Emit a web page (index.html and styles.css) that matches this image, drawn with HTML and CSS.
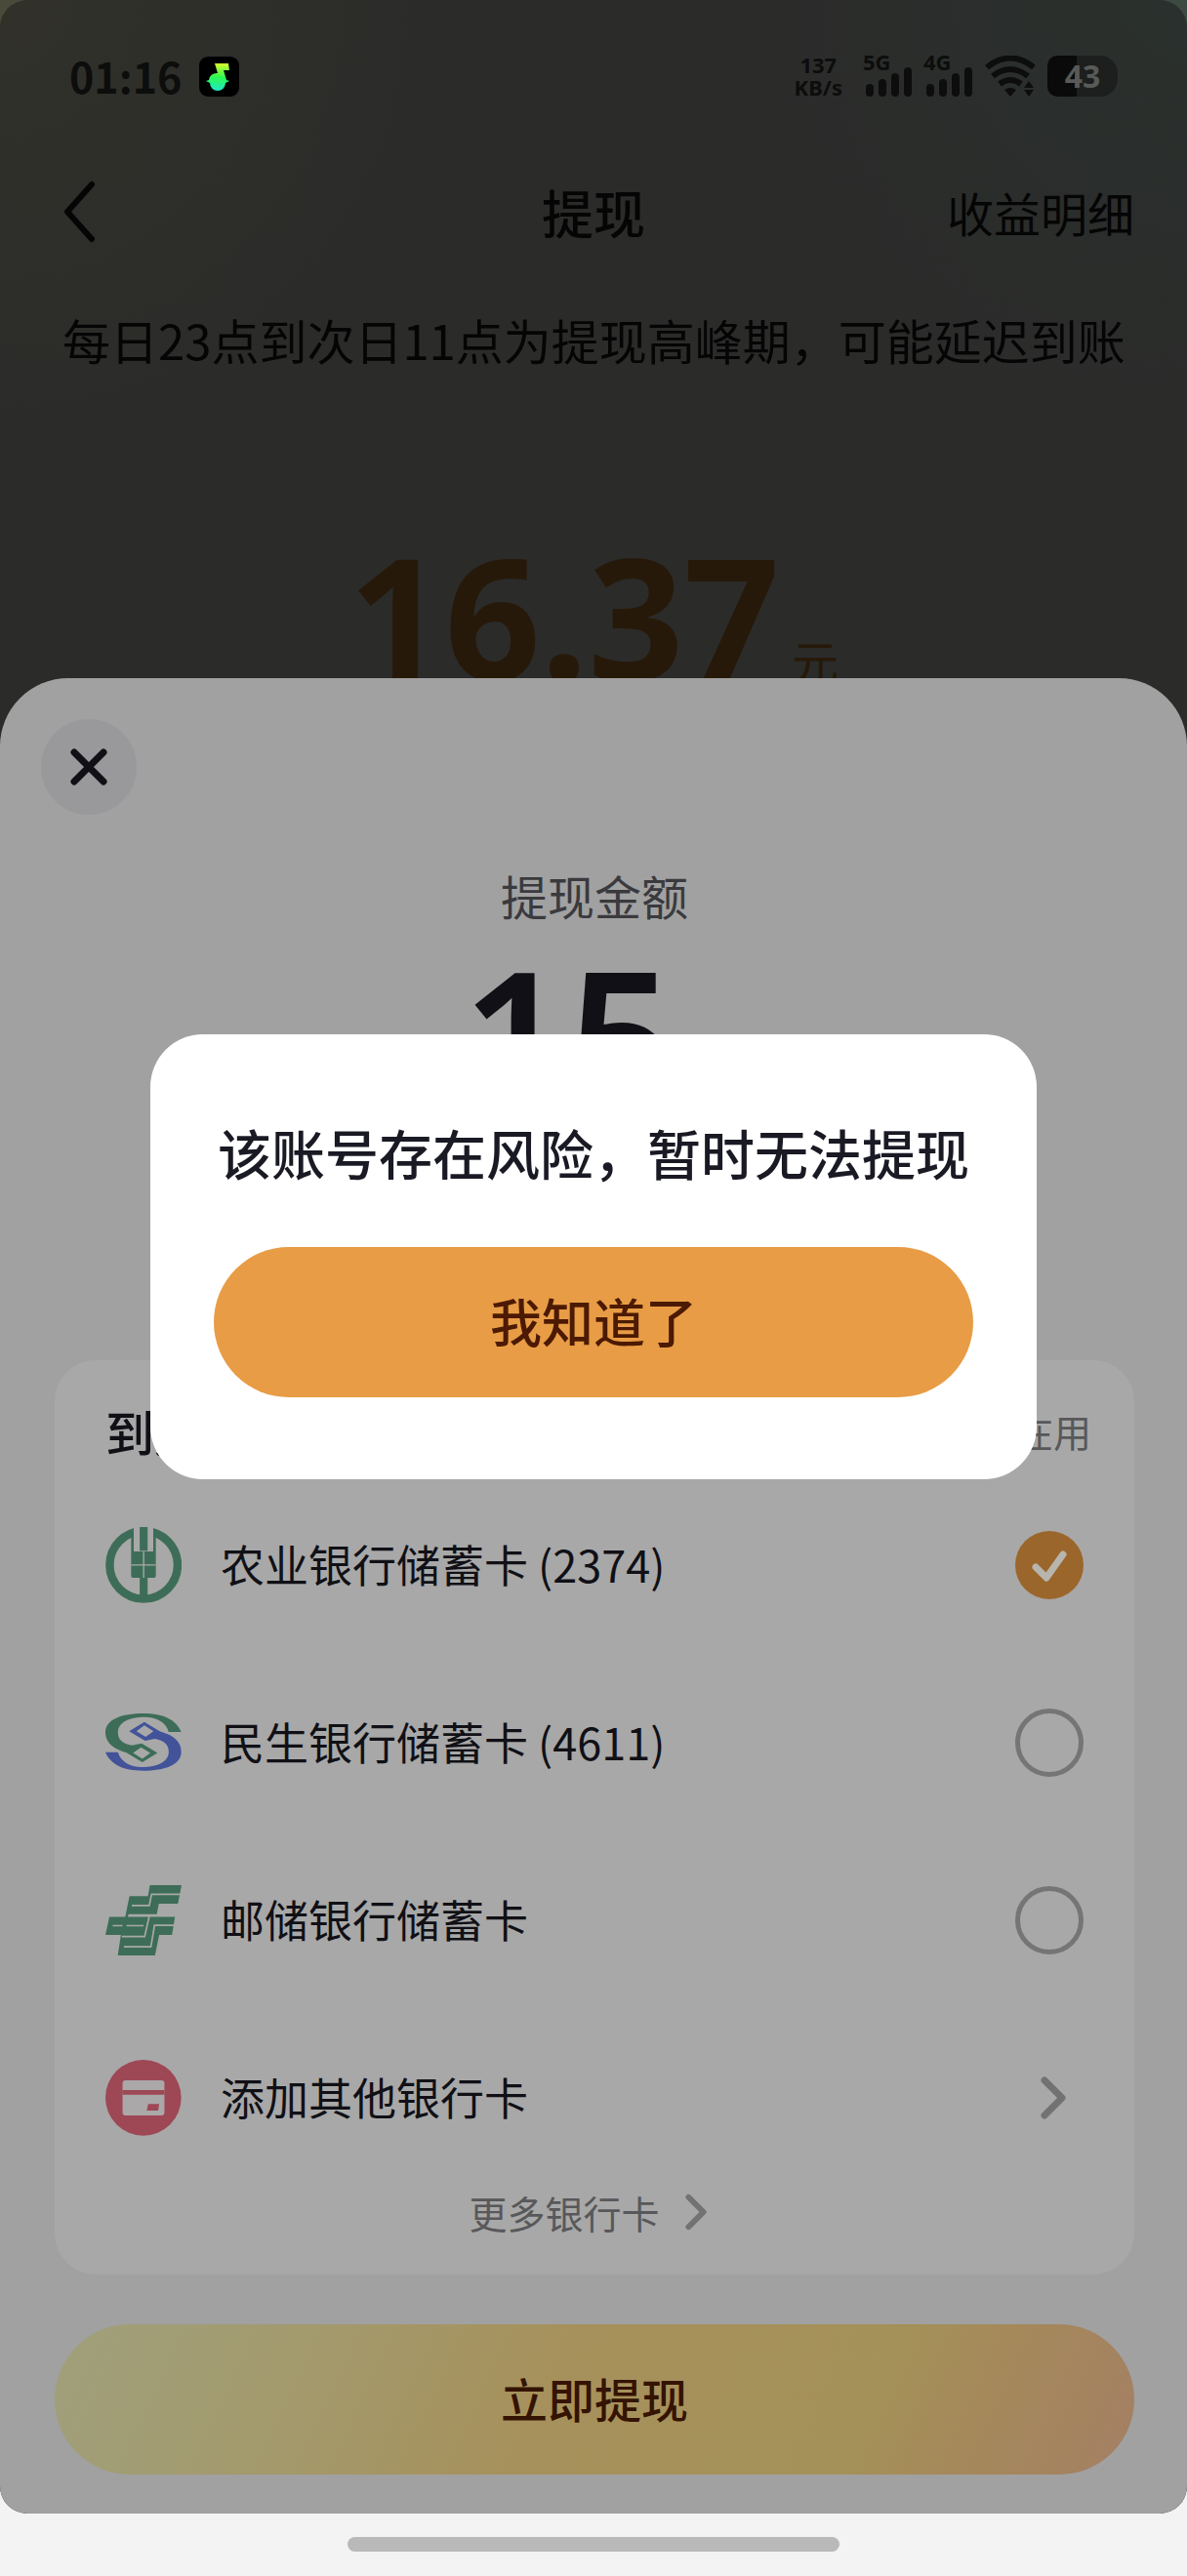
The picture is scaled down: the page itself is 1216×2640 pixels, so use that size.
FILE: index.html
```html
<!DOCTYPE html>
<html lang="zh-CN">
<head>
    <meta charset="UTF-8">
    <meta name="viewport" content="width=device-width, initial-scale=1.0">
    <title>提现</title>
    <link rel="stylesheet" href="styles.css">
</head>
<body>
    <div class="screen">
        <!-- Status bar -->
        <div class="status-bar">
            <span class="clock">01:16</span>
            <svg class="app-icon" viewBox="0 0 41 41" aria-hidden="true">
                <defs>
                    <linearGradient id="note" x1="0" y1="0" x2="0" y2="1">
                        <stop offset="0" stop-color="#d8ff2e"/>
                        <stop offset="0.5" stop-color="#2dfa50"/>
                        <stop offset="1" stop-color="#1fe8c8"/>
                    </linearGradient>
                </defs>
                <rect width="41" height="41" rx="9" fill="#000"/>
                <path fill="url(#note)" d="M16 7H30L31 14H25L28 24L31 25L27 27A8 8 0 0 1 11 27L7 25L10 24A8 8 0 0 1 19 17Z"/>
            </svg>
            <div class="status-icons">
                <span class="speed"><span>137</span><span>KB/s</span></span>
                <span class="signal">
                    <span class="signal-type">5G</span>
                    <svg viewBox="0 0 48 30" aria-hidden="true"><path d="M4 21V26M17 16V26M30 10V26M43 4V26"/></svg>
                </span>
                <span class="signal">
                    <span class="signal-type">4G</span>
                    <svg viewBox="0 0 48 30" aria-hidden="true"><path d="M4 21V26M17 16V26M30 10V26M43 4V26"/></svg>
                </span>
                <svg class="wifi" viewBox="0 0 52 42" aria-hidden="true">
                    <g fill="none" stroke="#0c0d0c" stroke-width="6">
                        <path d="M2 12Q26 -7 50 12"/>
                        <path d="M8 21Q26 7 44 21"/>
                        <path d="M15 29Q26 21 37 29"/>
                    </g>
                    <path fill="#0c0d0c" d="M20 35Q26 31 32 35L26 42ZM40 33L45 26L50 33ZM40 35L45 42L50 35Z"/>
                </svg>
                <span class="battery">43</span>
            </div>
        </div>

        <!-- Page behind the sheet -->
        <header class="nav">
            <button class="back" type="button" aria-label="返回">
                <svg viewBox="0 0 34 66" aria-hidden="true"><path d="M30 5L5 33L30 61"/></svg>
            </button>
            <h1>提现</h1>
            <a class="nav-link" href="#">收益明细</a>
        </header>
        <p class="notice">每日23点到次日11点为提现高峰期，可能延迟到账</p>
        <p class="balance"><span class="balance-value">16.37</span><span class="balance-unit">元</span></p>

        <!-- Withdraw sheet -->
        <form class="sheet">
            <button class="close" type="button" aria-label="关闭">
                <svg viewBox="0 0 38 38" aria-hidden="true"><path d="M4 4L34 34M34 4L4 34"/></svg>
            </button>
            <div class="amount">
                <p class="amount-label">提现金额</p>
                <p class="amount-value">15</p>
            </div>

            <div class="card">
                <div class="card-head">
                    <h2>到账</h2>
                    <span>在用</span>
                </div>
                <label class="row">
                    <svg class="logo" viewBox="0 0 231 231" aria-hidden="true">
                        <circle cx="116" cy="115" r="103" fill="none" stroke="#3d6d58" stroke-width="25"/>
                        <path fill="#a8a8a8" d="M86 0H146V60H86Z"/>
                        <path fill="#3d6d58" d="M78 8L86 4V74H145V4L153 8V148Q153 154 147 154H128V215H104V154H84Q78 154 78 148Z"/>
                        <path fill="#a8a8a8" d="M86 0H145V60Q145 74 132 74H99Q86 74 86 60Z"/>
                        <path fill="#3d6d58" d="M104 0H128V72H104Z"/>
                        <path stroke="#a8a8a8" stroke-width="4" d="M116 74V154M78 115H153"/>
                    </svg>
                    <span class="row-name">农业银行储蓄卡 (2374)</span>
                    <input type="radio" name="bank" value="2374" checked>
                </label>
                <label class="row">
                    <svg class="logo" viewBox="0 0 231 175" aria-hidden="true">
                        <defs>
                            <path id="swirl" fill-rule="evenodd" d="M230 56H192C184 27 155 11 120 11C72 11 38 27 38 58C38 80 52 92 80 97L110 91L158 120L112 148L64 119C22 107 0 88 0 57C0 18 50 0 115 0C178 0 215 20 230 56ZM84 120L112 138L136 120L108 103Z"/>
                        </defs>
                        <use href="#swirl" fill="#3d6d58"/>
                        <use href="#swirl" fill="#425399" transform="rotate(180 115 87)"/>
                    </svg>
                    <span class="row-name">民生银行储蓄卡 (4611)</span>
                    <input type="radio" name="bank" value="4611">
                </label>
                <label class="row">
                    <svg class="logo" viewBox="0 0 231 216" aria-hidden="true">
                        <path fill="#3d6d58" d="M135 0H231L220 56H162L156 88H70L68 96H211L202 151H163L150 216H37L47 151H0L12 96H60L73 33H129Z"/>
                        <path fill="none" stroke="#a8a8a8" stroke-width="5" d="M228 28H140L133 62H80M22 123H52M64 123H116M133 94L119 156H50M208 122H149L138 187H56"/>
                    </svg>
                    <span class="row-name">邮储银行储蓄卡</span>
                    <input type="radio" name="bank" value="psbc">
                </label>
                <a class="row" href="#">
                    <svg class="logo" viewBox="0 0 231 231" aria-hidden="true">
                        <circle cx="115" cy="115" r="115" fill="#9e4755"/>
                        <rect x="52" y="62" width="127" height="107" rx="9" fill="#aaa8a8"/>
                        <path fill="#9e4755" d="M52 92H179V106H52ZM130 134H163L160 154H125Z"/>
                    </svg>
                    <span class="row-name">添加其他银行卡</span>
                    <svg class="chevron" viewBox="0 0 26 44" aria-hidden="true"><path d="M4 4L22 22L4 40"/></svg>
                </a>
                <a class="more" href="#">
                    更多银行卡
                    <svg viewBox="0 0 26 44" aria-hidden="true"><path d="M4 4L22 22L4 40"/></svg>
                </a>
            </div>

            <button class="submit" type="submit">立即提现</button>
        </form>

        <!-- Risk dialog -->
        <div class="overlay">
            <div class="dialog" role="alertdialog" aria-labelledby="dialog-title">
                <p id="dialog-title">该账号存在风险，暂时无法提现</p>
                <button type="button">我知道了</button>
            </div>
        </div>
    </div>

    <div class="home-area"><span class="home-bar"></span></div>
</body>
</html>
```
FILE: styles.css
```css
* {
    box-sizing: border-box;
}
body {
    margin: 0;
    min-height: 100vh;
    display: flex;
    flex-direction: column;
    background: linear-gradient(90deg, #4a4a3a, #3c4a42) top / 100% 200px no-repeat #f3f3f3;
    font-family: "Noto Sans CJK SC", sans-serif;
    color: #101016;
}
h1, h2, p {
    margin: 0;
    font-weight: 500;
}
button {
    border: none;
    padding: 0;
    font-family: inherit;
    cursor: pointer;
}
a {
    color: inherit;
    text-decoration: none;
}
svg {
    display: block;
    flex: none;
}

.screen {
    position: relative;
    border-radius: 28px;
    overflow: hidden;
    background: radial-gradient(circle at 0 0, #31312a, transparent 460px),
        radial-gradient(circle at 100% 0, #2a302d, transparent 460px),
        #2b2b2a;
}

/* Status bar */
.status-bar {
    display: flex;
    align-items: center;
    padding: 42px 71px 0;
    height: 114px;
    color: #0c0d0c;
}
.clock {
    padding-bottom: 2px;
    font-size: 43px;
    font-weight: 700;
    line-height: 68px;
}
.app-icon {
    width: 41px;
    height: 41px;
    margin-left: 18px;
}
.status-icons {
    display: flex;
    align-items: center;
    gap: 12px;
    margin-left: auto;
}
.speed {
    display: flex;
    flex-direction: column;
    margin-right: 10px;
    font-family: "Noto Sans", sans-serif;
    font-size: 22px;
    font-weight: 700;
    line-height: 23px;
    text-align: center;
}
.signal {
    position: relative;
    padding-top: 12px;
    margin-left: 2px;
}
.signal-type {
    position: absolute;
    left: -3px;
    top: -6px;
    font-family: "Noto Sans", sans-serif;
    font-size: 22px;
    font-weight: 700;
    line-height: 24px;
}
.signal svg {
    width: 48px;
    height: 30px;
    fill: none;
    stroke: #0c0d0c;
    stroke-width: 8;
    stroke-linecap: round;
}
.wifi {
    width: 52px;
    height: 42px;
}
.battery {
    width: 72px;
    border-radius: 10px 18px 18px 10px;
    background: linear-gradient(90deg, #090a09 42%, #1c1f1d 42%);
    color: #585a58;
    font-family: "Noto Sans", sans-serif;
    font-size: 32px;
    font-weight: 700;
    line-height: 42px;
    text-align: center;
}

/* Page header */
.nav {
    display: grid;
    grid-template-columns: 1fr auto 1fr;
    align-items: center;
    height: 206px;
    padding: 0 54px;
    color: #050505;
}
.back {
    width: 34px;
    margin-left: 10px;
    background: none;
}
.back svg {
    width: 34px;
    height: 66px;
    fill: none;
    stroke: #050505;
    stroke-width: 6;
    stroke-linecap: round;
    stroke-linejoin: round;
}
.nav h1 {
    font-size: 53px;
}
.nav-link {
    justify-self: end;
    font-size: 48px;
}
.notice {
    padding: 0 64px;
    font-size: 49px;
    font-weight: 400;
    line-height: 56px;
    white-space: nowrap;
    color: #050505;
}
.balance {
    display: flex;
    align-items: baseline;
    justify-content: center;
    gap: 12px;
    margin-top: 154px;
    line-height: 200px;
    color: #271909;
}
.balance-value {
    font-family: "Noto Sans", sans-serif;
    font-size: 172px;
    font-weight: 700;
}
.balance-unit {
    font-size: 48px;
    font-weight: 400;
}

/* Withdraw sheet */
.sheet {
    position: relative;
    display: flex;
    flex-direction: column;
    margin-top: -81px;
    padding: 42px 54px 40px 56px;
    border-radius: 70px 70px 0 0;
    background: #a1a1a1;
}
.close {
    display: grid;
    place-items: center;
    width: 98px;
    height: 98px;
    margin-left: -14px;
    border-radius: 50%;
    background: #99999c;
}
.close svg {
    width: 38px;
    height: 38px;
    fill: none;
    stroke: #101016;
    stroke-width: 7;
    stroke-linecap: round;
}
.amount {
    min-height: 559px;
    padding-top: 46px;
    text-align: center;
}
.amount-label {
    font-size: 48px;
    font-weight: 400;
    line-height: 72px;
    color: #3a3a3e;
}
.amount-value {
    margin-top: 12px;
    padding-right: 54px;
    font-family: "Noto Sans", sans-serif;
    font-size: 190px;
    font-weight: 600;
    line-height: 190px;
}

/* Bank card list */
.card {
    padding: 36px 52px 38px;
    border-radius: 42px;
    background: #a8a8a8;
}
.card-head {
    display: flex;
    align-items: center;
    justify-content: space-between;
    padding-bottom: 11px;
    line-height: 72px;
}
.card-head h2 {
    font-size: 50px;
}
.card-head span {
    margin-right: -8px;
    font-size: 39px;
    color: #58585a;
}
.row {
    display: flex;
    align-items: center;
    height: 182px;
}
.logo {
    width: 78px;
    margin-right: 40px;
}
.row-name {
    flex: 1;
    padding-bottom: 4px;
    font-size: 45px;
}
.row input {
    appearance: none;
    width: 70px;
    height: 70px;
    margin: 0;
    border: 5px solid #757575;
    border-radius: 50%;
}
.row input:checked {
    border: none;
    background: #9b662b url("data:image/svg+xml,%3Csvg xmlns='http://www.w3.org/2000/svg' viewBox='0 0 70 70'%3E%3Cpath d='M21 37L32 48L49 24' fill='none' stroke='%23b8b4ae' stroke-width='7' stroke-linecap='round' stroke-linejoin='round'/%3E%3C/svg%3E");
}
.chevron {
    width: 26px;
    height: 44px;
    margin-right: 18px;
}
.chevron, .more svg {
    fill: none;
    stroke: #727272;
    stroke-width: 7;
    stroke-linecap: round;
    stroke-linejoin: round;
}
.more {
    display: flex;
    align-items: center;
    justify-content: center;
    gap: 26px;
    padding-right: 14px;
    font-size: 39px;
    line-height: 52px;
    color: #58585a;
}
.more svg {
    width: 22px;
    height: 38px;
}
.submit {
    margin-top: 51px;
    padding-bottom: 4px;
    border-radius: 77px;
    background: linear-gradient(115deg, #a0a07c, #a3996b 25%, #a6915c 45%, #a49059 75%, #a5885b 85%, #a37f64);
    color: #351302;
    font-size: 48px;
    font-weight: 500;
    line-height: 150px;
}

/* Risk dialog */
.overlay {
    position: absolute;
    inset: 0;
    display: flex;
    align-items: center;
    justify-content: center;
}
.dialog {
    display: flex;
    flex-direction: column;
    padding: 80px 65px 84px;
    border-radius: 54px;
    background: #fff;
    text-align: center;
}
.dialog p {
    padding: 0 4px;
    font-size: 55px;
    line-height: 80px;
    color: #191a24;
}
.dialog button {
    margin-top: 58px;
    padding-bottom: 4px;
    border-radius: 77px;
    background: #e89c45;
    color: #4c1a03;
    font-size: 53px;
    font-weight: 500;
    line-height: 150px;
}

/* System gesture bar */
.home-area {
    display: flex;
    justify-content: center;
    padding: 24px 0;
}
.home-bar {
    width: 504px;
    height: 15px;
    border-radius: 8px;
    background: #b9b9b9;
}
```
